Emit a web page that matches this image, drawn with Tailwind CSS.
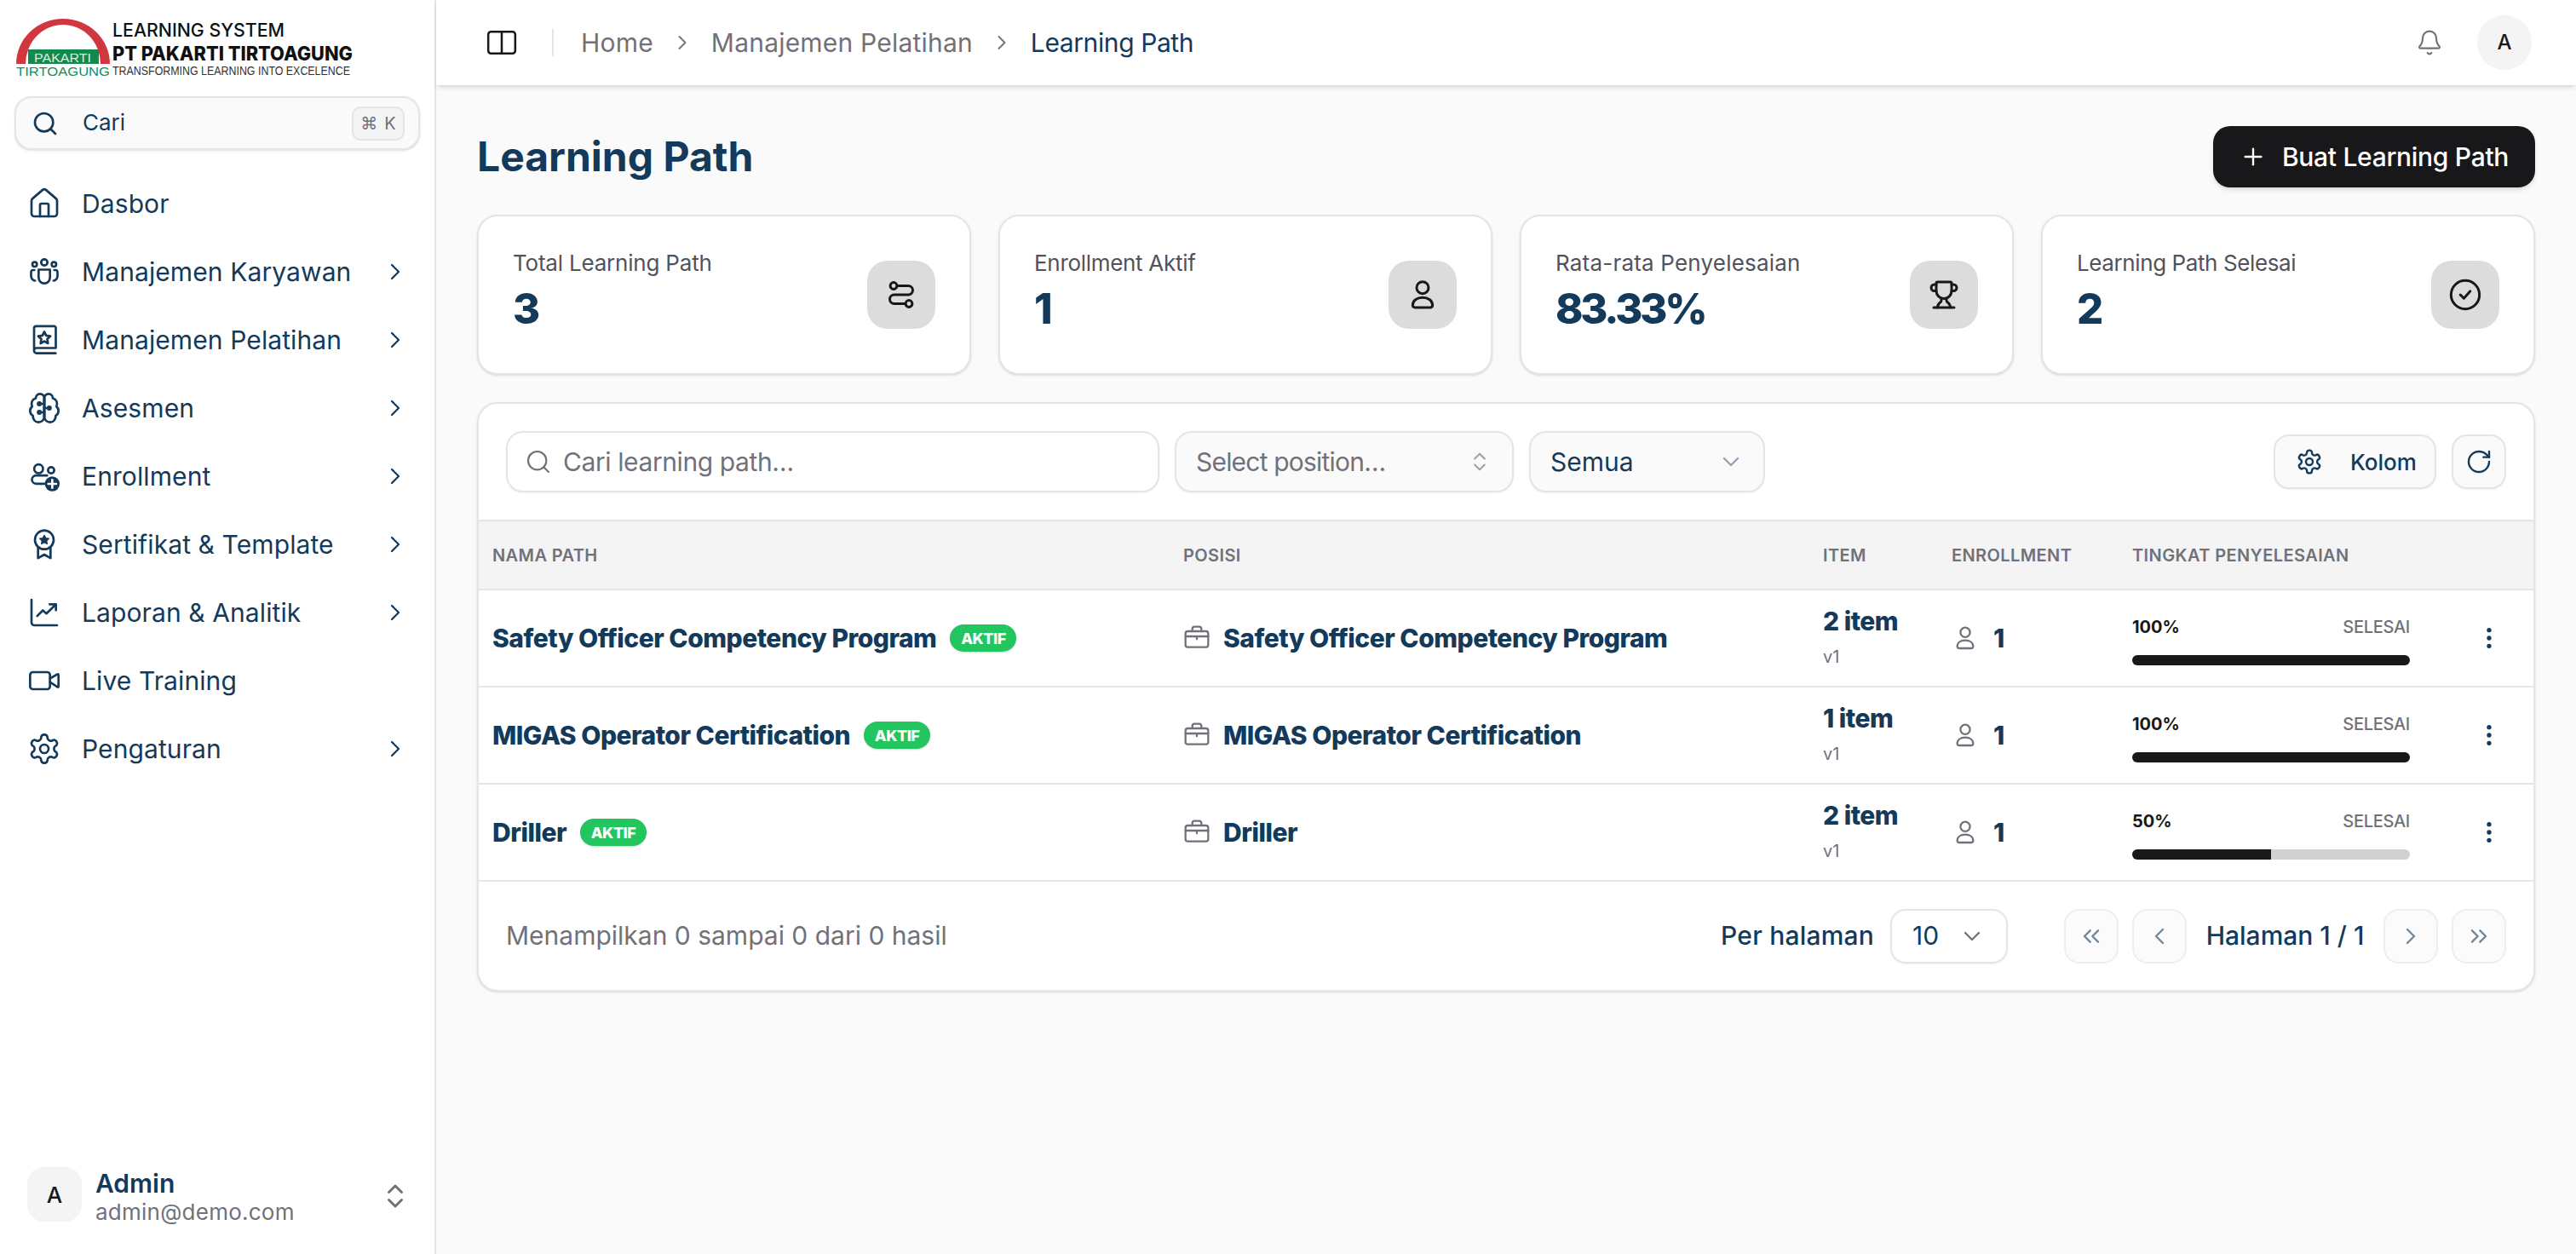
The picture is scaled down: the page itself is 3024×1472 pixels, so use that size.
<!DOCTYPE html>
<html lang="id">

<head>
  <meta charset="UTF-8" />
  <title>Learning Path</title>
  <script src="https://cdn.jsdelivr.net/npm/@tailwindcss/browser@4"></script>
</head>

<body class="h-screen overflow-hidden flex bg-[#fafafa] text-[#133a5b] font-[Inter,sans-serif]">

  <!-- Sidebar -->
  <aside class="w-[512px] shrink-0 h-full bg-white border-r-2 border-[#e4e4ea] flex flex-col">
    <svg class="block shrink-0" width="510" height="113" viewBox="0 0 510 113">
      <path d="M19 75a55 53 0 0 1 110 0h-11a44 46 0 0 0-88 0z" fill="#d1373f" />
      <rect x="33" y="58" width="83" height="17" fill="#14894e" />
      <text x="40" y="73" font-family="Liberation Sans" font-size="15" fill="#d9efe2" textLength="67" lengthAdjust="spacingAndGlyphs">PAKARTI</text>
      <text x="19" y="89" font-family="Liberation Sans" font-size="15.5" fill="#1d8a55" textLength="110" lengthAdjust="spacingAndGlyphs">TIRTOAGUNG</text>
      <text x="132" y="43" font-family="Inter" font-weight="500" font-size="22" fill="#111" textLength="202" lengthAdjust="spacingAndGlyphs">LEARNING SYSTEM</text>
      <text x="132" y="71" font-family="Inter" font-weight="800" font-size="23" fill="#111" textLength="282" lengthAdjust="spacingAndGlyphs">PT PAKARTI TIRTOAGUNG</text>
      <text x="132" y="88" font-family="Liberation Sans" font-size="14" fill="#333" textLength="279" lengthAdjust="spacingAndGlyphs">TRANSFORMING LEARNING INTO EXCELENCE</text>
    </svg>

    <div class="mx-[17px] w-[476px] h-[63px] shrink-0 rounded-[20px] border-2 border-[#e4e4ea] bg-[#fafafa] shadow-sm flex items-center pl-[18px] pr-[16px]">
      <svg class="w-8 h-8" viewBox="0 0 24 24" fill="none" stroke="currentColor" stroke-width="2" stroke-linecap="round" stroke-linejoin="round"><path d="m21 21-4.34-4.34" /><circle cx="11" cy="11" r="8" /></svg>
      <span class="ml-[28px] pb-[2px] text-[26px]">Cari</span>
      <span class="ml-auto w-[62px] h-[40px] rounded-[10px] border-2 border-[#e4e4ea] bg-[#f4f4f5] text-[#71717a] text-[20px] flex items-center justify-center gap-2 font-['DejaVu_Sans',sans-serif]">⌘<span class="font-[Inter,sans-serif]">K</span></span>
    </div>

    <nav class="mt-[23px] text-[30px] tracking-[0.1px]">
      <a class="h-[80px] flex items-center pl-8 pr-[30px] gap-[24px]">
        <svg class="w-10 h-10 shrink-0" viewBox="0 0 24 24" fill="none" stroke="currentColor" stroke-width="1.6" stroke-linecap="round" stroke-linejoin="round"><path d="M15 21v-8a1 1 0 0 0-1-1h-4a1 1 0 0 0-1 1v8" /><path d="M3 10a2 2 0 0 1 .709-1.528l7-5.999a2 2 0 0 1 2.582 0l7 5.999A2 2 0 0 1 21 10v9a2 2 0 0 1-2 2H5a2 2 0 0 1-2-2z" /></svg>
        <span>Dasbor</span>
      </a>
      <a class="h-[80px] flex items-center pl-8 pr-[30px] gap-[24px]">
        <svg class="w-10 h-10 shrink-0" viewBox="0 0 24 24" fill="none" stroke="currentColor" stroke-width="1.6" stroke-linecap="round" stroke-linejoin="round"><circle cx="12" cy="5.4" r="2.2" /><circle cx="5.2" cy="6.8" r="1.6" /><circle cx="18.8" cy="6.8" r="1.6" /><path d="M8 10.5h8v5.7a4 4 0 0 1-8 0z" /><path d="M5 10.8H4.2A1.5 1.5 0 0 0 2.7 12.3v2.5a3.6 3.6 0 0 0 2.8 3.5" /><path d="M19 10.8h.8a1.5 1.5 0 0 1 1.5 1.5v2.5a3.6 3.6 0 0 1-2.8 3.5" /></svg>
        <span>Manajemen Karyawan</span>
        <svg class="w-8 h-8 ml-auto" viewBox="0 0 24 24" fill="none" stroke="currentColor" stroke-width="1.7" stroke-linecap="round" stroke-linejoin="round"><path d="m9 18 6-6-6-6" /></svg>
      </a>
      <a class="h-[80px] flex items-center pl-8 pr-[30px] gap-[24px]">
        <svg class="w-10 h-10 shrink-0" viewBox="0 0 24 24" fill="none" stroke="currentColor" stroke-width="1.6" stroke-linecap="round" stroke-linejoin="round"><path d="M4.8 19.5V3.8a1.5 1.5 0 0 1 1.5-1.5h12.6a1.2 1.2 0 0 1 1.2 1.2v14.2H6.5a1.8 1.8 0 0 0-1.7 1.8 1.8 1.8 0 0 0 1.7 1.9H20" /><path d="M12 6.2l1.3 2.7 3 .4-2.2 2.1.5 3-2.6-1.4-2.6 1.4.5-3-2.2-2.1 3-.4z" /></svg>
        <span>Manajemen Pelatihan</span>
        <svg class="w-8 h-8 ml-auto" viewBox="0 0 24 24" fill="none" stroke="currentColor" stroke-width="1.7" stroke-linecap="round" stroke-linejoin="round"><path d="m9 18 6-6-6-6" /></svg>
      </a>
      <a class="h-[80px] flex items-center pl-8 pr-[30px] gap-[24px]">
        <svg class="w-10 h-10 shrink-0" viewBox="0 0 24 24" fill="none" stroke="currentColor" stroke-width="1.6" stroke-linecap="round" stroke-linejoin="round"><path d="M12 5a3 3 0 1 0-5.997.125 4 4 0 0 0-2.526 5.77 4 4 0 0 0 .556 6.588A4 4 0 1 0 12 18Z" /><path d="M12 5a3 3 0 1 1 5.997.125 4 4 0 0 1 2.526 5.77 4 4 0 0 1-.556 6.588A4 4 0 1 1 12 18Z" /><path d="M12 5v13M12 9H9.5M12 15H9.5M12 12h2.5" /><circle cx="8.5" cy="9" r="1" /><circle cx="8.5" cy="15" r="1" /><circle cx="15.5" cy="12" r="1" /></svg>
        <span>Asesmen</span>
        <svg class="w-8 h-8 ml-auto" viewBox="0 0 24 24" fill="none" stroke="currentColor" stroke-width="1.7" stroke-linecap="round" stroke-linejoin="round"><path d="m9 18 6-6-6-6" /></svg>
      </a>
      <a class="h-[80px] flex items-center pl-8 pr-[30px] gap-[24px]">
        <svg class="w-10 h-10 shrink-0" viewBox="0 0 24 24" fill="none" stroke="currentColor" stroke-width="1.6" stroke-linecap="round" stroke-linejoin="round"><circle cx="8" cy="6.8" r="3.1" /><circle cx="16.8" cy="7.8" r="2.2" /><path d="M14 11.5H6.2a2.9 2.9 0 0 0 0 5.8H12" /><circle cx="17.6" cy="17.4" r="5.2" fill="currentColor" stroke="none" /><path d="M17.6 14.6v5.6M14.8 17.4h5.6" stroke="#fff" /></svg>
        <span>Enrollment</span>
        <svg class="w-8 h-8 ml-auto" viewBox="0 0 24 24" fill="none" stroke="currentColor" stroke-width="1.7" stroke-linecap="round" stroke-linejoin="round"><path d="m9 18 6-6-6-6" /></svg>
      </a>
      <a class="h-[80px] flex items-center pl-8 pr-[30px] gap-[24px]">
        <svg class="w-10 h-10 shrink-0" viewBox="0 0 24 24" fill="none" stroke="currentColor" stroke-width="1.6" stroke-linecap="round" stroke-linejoin="round"><circle cx="12" cy="8.8" r="6.6" /><path d="M12 5.6l1 2 2.2.3-1.6 1.5.4 2.2-2-1-2 1 .4-2.2-1.6-1.5 2.2-.3z" fill="currentColor" stroke-width="0.8" /><path d="M7.6 14.5v7.2L12 19.2l4.4 2.5v-7.2" /></svg>
        <span>Sertifikat &amp; Template</span>
        <svg class="w-8 h-8 ml-auto" viewBox="0 0 24 24" fill="none" stroke="currentColor" stroke-width="1.7" stroke-linecap="round" stroke-linejoin="round"><path d="m9 18 6-6-6-6" /></svg>
      </a>
      <a class="h-[80px] flex items-center pl-8 pr-[30px] gap-[24px]">
        <svg class="w-10 h-10 shrink-0" viewBox="0 0 24 24" fill="none" stroke="currentColor" stroke-width="1.6" stroke-linecap="round" stroke-linejoin="round"><path d="M3 3v16a2 2 0 0 0 2 2h16" /><path d="m7 14.5 4-4 2.5 2.2 6.5-6.2" /><path d="M15.8 6.2h4.4v4.2" /></svg>
        <span>Laporan &amp; Analitik</span>
        <svg class="w-8 h-8 ml-auto" viewBox="0 0 24 24" fill="none" stroke="currentColor" stroke-width="1.7" stroke-linecap="round" stroke-linejoin="round"><path d="m9 18 6-6-6-6" /></svg>
      </a>
      <a class="h-[80px] flex items-center pl-8 pr-[30px] gap-[24px]">
        <svg class="w-10 h-10 shrink-0" viewBox="0 0 24 24" fill="none" stroke="currentColor" stroke-width="1.6" stroke-linecap="round" stroke-linejoin="round"><path d="m16 13 5.223 3.482a.5.5 0 0 0 .777-.416V7.87a.5.5 0 0 0-.752-.432L16 10.5" /><rect x="2" y="6" width="14" height="12" rx="2" /></svg>
        <span>Live Training</span>
      </a>
      <a class="h-[80px] flex items-center pl-8 pr-[30px] gap-[24px]">
        <svg class="w-10 h-10 shrink-0" viewBox="0 0 24 24" fill="none" stroke="currentColor" stroke-width="1.6" stroke-linecap="round" stroke-linejoin="round"><path d="M12.22 2h-.44a2 2 0 0 0-2 2v.18a2 2 0 0 1-1 1.73l-.43.25a2 2 0 0 1-2 0l-.15-.08a2 2 0 0 0-2.73.73l-.22.38a2 2 0 0 0 .73 2.73l.15.1a2 2 0 0 1 1 1.72v.51a2 2 0 0 1-1 1.74l-.15.09a2 2 0 0 0-.73 2.73l.22.38a2 2 0 0 0 2.73.73l.15-.08a2 2 0 0 1 2 0l.43.25a2 2 0 0 1 1 1.73V20a2 2 0 0 0 2 2h.44a2 2 0 0 0 2-2v-.18a2 2 0 0 1 1-1.73l.43-.25a2 2 0 0 1 2 0l.15.08a2 2 0 0 0 2.73-.73l.22-.39a2 2 0 0 0-.73-2.73l-.15-.08a2 2 0 0 1-1-1.74v-.5a2 2 0 0 1 1-1.74l.15-.09a2 2 0 0 0 .73-2.73l-.22-.38a2 2 0 0 0-2.73-.73l-.15.08a2 2 0 0 1-2 0l-.43-.25a2 2 0 0 1-1-1.73V4a2 2 0 0 0-2-2z" /><circle cx="12" cy="12" r="3" /></svg>
        <span>Pengaturan</span>
        <svg class="w-8 h-8 ml-auto" viewBox="0 0 24 24" fill="none" stroke="currentColor" stroke-width="1.7" stroke-linecap="round" stroke-linejoin="round"><path d="m9 18 6-6-6-6" /></svg>
      </a>
    </nav>

    <div class="mt-auto mb-8 pl-8 pr-[30px] flex items-center">
      <div class="w-16 h-16 rounded-[20px] bg-[#f4f4f5] text-[#18181b] text-[26px] font-medium flex items-center justify-center">A</div>
      <div class="ml-4 pt-[8px] flex flex-col">
        <span class="text-[30px] leading-[34px] font-semibold">Admin</span>
        <span class="text-[26px] leading-[34px] tracking-[0.25px] text-[#71717a]">admin@demo.com</span>
      </div>
      <svg class="w-9 h-9 ml-auto -mr-[2px] mt-[4px] text-[#71717a]" viewBox="0 0 24 24" fill="none" stroke="currentColor" stroke-width="2" stroke-linecap="round" stroke-linejoin="round"><path d="m7 15 5 5 5-5" /><path d="m7 9 5-5 5 5" /></svg>
    </div>
  </aside>

  <!-- Main -->
  <div class="flex-1 min-w-0 flex flex-col">
    <header class="relative h-[100px] shrink-0 bg-white shadow-md flex items-center pl-[58px] pr-[52px]">
      <svg class="w-[38px] h-[38px] text-[#18181b]" viewBox="0 0 24 24" fill="none" stroke="currentColor" stroke-width="1.6" stroke-linecap="round" stroke-linejoin="round"><rect x="2" y="4" width="20" height="16" rx="2" /><path d="M12 4v16" /></svg>
      <div class="ml-[40px] w-[2px] h-8 bg-[#e4e4ea]"></div>
      <nav class="ml-[32px] flex items-center text-[30px] tracking-[0.2px] text-[#71717a]">
        <span>Home</span>
        <svg class="w-7 h-7 mx-[20px]" viewBox="0 0 24 24" fill="none" stroke="currentColor" stroke-width="1.6" stroke-linecap="round" stroke-linejoin="round"><path d="m9 18 6-6-6-6" /></svg>
        <span>Manajemen Pelatihan</span>
        <svg class="w-7 h-7 mx-[20px]" viewBox="0 0 24 24" fill="none" stroke="currentColor" stroke-width="1.6" stroke-linecap="round" stroke-linejoin="round"><path d="m9 18 6-6-6-6" /></svg>
        <span class="text-[#133a5b] tracking-[-0.4px]">Learning Path</span>
      </nav>
      <svg class="ml-auto w-8 h-8 text-[#71717a]" viewBox="0 0 24 24" fill="none" stroke="currentColor" stroke-width="1.6" stroke-linecap="round" stroke-linejoin="round"><path d="M10.268 21a2 2 0 0 0 3.464 0" /><path d="M3.262 15.326A1 1 0 0 0 4 17h16a1 1 0 0 0 .74-1.673C19.41 13.956 18 12.499 18 8A6 6 0 0 0 6 8c0 4.499-1.411 5.956-2.738 7.326" /></svg>
      <div class="ml-[40px] w-16 h-16 rounded-full bg-[#f4f4f5] text-[#18181b] text-[24px] font-medium flex items-center justify-center">A</div>
    </header>

    <main class="flex-1 min-h-0 px-12 pt-12">
      <div class="flex items-center justify-between h-[72px]">
        <h1 class="text-[48px] font-bold">Learning Path</h1>
        <button class="h-[72px] w-[378px] rounded-[20px] bg-[#18181b] text-white text-[30px] font-medium tracking-[-0.3px] shadow-md flex items-center justify-center gap-[18px]">
          <svg class="w-8 h-8" viewBox="0 0 24 24" fill="none" stroke="currentColor" stroke-width="1.8" stroke-linecap="round" stroke-linejoin="round"><path d="M5 12h14" /><path d="M12 5v14" /></svg>
          Buat Learning Path
        </button>
      </div>

      <!-- Stat cards -->
      <div class="mt-8 grid grid-cols-4 gap-8">
        <div class="h-[188px] rounded-[24px] border-2 border-[#e4e4ea] bg-white shadow-sm flex items-center justify-between px-10">
          <div class="pb-[6px]">
            <div class="text-[26px] leading-[40px] tracking-[-0.2px] text-[#52525b]">Total Learning Path</div>
            <div class="text-[49px] leading-[68px] font-extrabold tracking-[-3.2px]">3</div>
          </div>
          <div class="w-20 h-20 rounded-[24px] bg-[#dcdcdc] text-[#18181b] flex items-center justify-center">
            <svg class="w-9 h-9" viewBox="0 0 24 24" fill="none" stroke="currentColor" stroke-width="2" stroke-linecap="round" stroke-linejoin="round"><circle cx="6" cy="5" r="2.6" /><path d="M9 5h8.5a3.5 3.5 0 0 1 0 7h-11a3.5 3.5 0 0 0 0 7H15" /><circle cx="18" cy="19" r="2.6" /></svg>
          </div>
        </div>
        <div class="h-[188px] rounded-[24px] border-2 border-[#e4e4ea] bg-white shadow-sm flex items-center justify-between px-10">
          <div class="pb-[6px]">
            <div class="text-[26px] leading-[40px] tracking-[-0.3px] text-[#52525b]">Enrollment Aktif</div>
            <div class="text-[49px] leading-[68px] font-extrabold tracking-[-3.2px]">1</div>
          </div>
          <div class="w-20 h-20 rounded-[24px] bg-[#dcdcdc] text-[#18181b] flex items-center justify-center">
            <svg class="w-10 h-10" viewBox="0 0 24 24" fill="none" stroke="currentColor" stroke-width="1.8" stroke-linecap="round" stroke-linejoin="round"><circle cx="12" cy="7" r="4.2" /><path d="M5 19.5c0-3.5 3-5.5 7-5.5s7 2 7 5.5c0 1-.8 1.5-2 1.5H7c-1.2 0-2-.5-2-1.5z" /></svg>
          </div>
        </div>
        <div class="h-[188px] rounded-[24px] border-2 border-[#e4e4ea] bg-white shadow-sm flex items-center justify-between px-10">
          <div class="pb-[6px]">
            <div class="text-[26px] leading-[40px] tracking-[0.2px] text-[#52525b]">Rata-rata Penyelesaian</div>
            <div class="text-[49px] leading-[68px] font-extrabold tracking-[-3.2px]">83.33%</div>
          </div>
          <div class="w-20 h-20 rounded-[24px] bg-[#dcdcdc] text-[#18181b] flex items-center justify-center">
            <svg class="w-9 h-9" viewBox="0 0 24 24" fill="none" stroke="currentColor" stroke-width="2" stroke-linecap="round" stroke-linejoin="round"><path d="M10 14.66v1.626a2 2 0 0 1-.976 1.696A5 5 0 0 0 7 21.978" /><path d="M14 14.66v1.626a2 2 0 0 0 .976 1.696A5 5 0 0 1 17 21.978" /><path d="M18 9h1.5a1 1 0 0 0 0-5H18" /><path d="M4 22h16" /><path d="M6 9a6 6 0 0 0 12 0V3a1 1 0 0 0-1-1H7a1 1 0 0 0-1 1z" /><path d="M6 9H4.5a1 1 0 0 1 0-5H6" /></svg>
          </div>
        </div>
        <div class="h-[188px] rounded-[24px] border-2 border-[#e4e4ea] bg-white shadow-sm flex items-center justify-between px-10">
          <div class="pb-[6px]">
            <div class="text-[26px] leading-[40px] tracking-[-0.4px] text-[#52525b]">Learning Path Selesai</div>
            <div class="text-[49px] leading-[68px] font-extrabold tracking-[-3.2px]">2</div>
          </div>
          <div class="w-20 h-20 rounded-[24px] bg-[#dcdcdc] text-[#18181b] flex items-center justify-center">
            <svg class="w-10 h-10" viewBox="0 0 24 24" fill="none" stroke="currentColor" stroke-width="1.8" stroke-linecap="round" stroke-linejoin="round"><circle cx="12" cy="12" r="10" /><path d="m8.5 12 2.5 2.5 4.5-5" /></svg>
          </div>
        </div>
      </div>

      <!-- Table card -->
      <div class="mt-8 rounded-[24px] border-2 border-[#e4e4ea] bg-white shadow-sm overflow-hidden">
        <div class="h-[138px] border-b-2 border-[#e4e4ea] px-8 flex items-center gap-[18px]">
          <div class="w-[767px] h-[72px] rounded-[20px] border-2 border-[#e4e4ea] bg-white shadow-xs flex items-center pl-[20px] text-[30px] text-[#71717a]">
            <svg class="w-8 h-8 shrink-0" viewBox="0 0 24 24" fill="none" stroke="currentColor" stroke-width="1.6" stroke-linecap="round" stroke-linejoin="round"><path d="m21 21-4.34-4.34" /><circle cx="11" cy="11" r="8" /></svg>
            <span class="ml-[13px] tracking-[-0.4px]">Cari learning path…</span>
          </div>
          <div class="w-[398px] h-[72px] rounded-[20px] border-2 border-[#e4e4ea] bg-[#fafafa] shadow-xs flex items-center justify-between pl-[23px] pr-[24px] text-[30px] text-[#71717a]">
            <span class="tracking-[-0.8px]">Select position…</span>
            <svg class="w-7 h-7 text-[#a1a1aa]" viewBox="0 0 24 24" fill="none" stroke="currentColor" stroke-width="1.8" stroke-linecap="round" stroke-linejoin="round"><path d="m7 15 5 5 5-5" /><path d="m7 9 5-5 5 5" /></svg>
          </div>
          <div class="w-[277px] h-[72px] rounded-[20px] border-2 border-[#e4e4ea] bg-[#fafafa] shadow-xs flex items-center justify-between pl-[23px] pr-[22px] text-[30px]">
            <span>Semua</span>
            <svg class="w-8 h-8 text-[#8fa0b2]" viewBox="0 0 24 24" fill="none" stroke="currentColor" stroke-width="1.7" stroke-linecap="round" stroke-linejoin="round"><path d="m6 9 6 6 6-6" /></svg>
          </div>
          <button class="ml-auto w-[191px] h-[64px] rounded-[18px] border-2 border-[#e4e4ea] bg-[#fafafa] shadow-xs flex items-center pl-[24px] text-[26px] font-medium">
            <svg class="w-8 h-8" viewBox="0 0 24 24" fill="none" stroke="currentColor" stroke-width="1.8" stroke-linecap="round" stroke-linejoin="round"><path d="M12.22 2h-.44a2 2 0 0 0-2 2v.18a2 2 0 0 1-1 1.73l-.43.25a2 2 0 0 1-2 0l-.15-.08a2 2 0 0 0-2.73.73l-.22.38a2 2 0 0 0 .73 2.73l.15.1a2 2 0 0 1 1 1.72v.51a2 2 0 0 1-1 1.74l-.15.09a2 2 0 0 0-.73 2.73l.22.38a2 2 0 0 0 2.73.73l.15-.08a2 2 0 0 1 2 0l.43.25a2 2 0 0 1 1 1.73V20a2 2 0 0 0 2 2h.44a2 2 0 0 0 2-2v-.18a2 2 0 0 1 1-1.73l.43-.25a2 2 0 0 1 2 0l.15.08a2 2 0 0 0 2.73-.73l.22-.39a2 2 0 0 0-.73-2.73l-.15-.08a2 2 0 0 1-1-1.74v-.5a2 2 0 0 1 1-1.74l.15-.09a2 2 0 0 0 .73-2.73l-.22-.38a2 2 0 0 0-2.73-.73l-.15.08a2 2 0 0 1-2 0l-.43-.25a2 2 0 0 1-1-1.73V4a2 2 0 0 0-2-2z" /><circle cx="12" cy="12" r="3" /></svg>
            <span class="ml-[32px]">Kolom</span>
          </button>
          <button class="w-16 h-16 rounded-[18px] border-2 border-[#e4e4ea] bg-[#fafafa] shadow-xs flex items-center justify-center">
            <svg class="w-8 h-8" viewBox="0 0 24 24" fill="none" stroke="currentColor" stroke-width="1.8" stroke-linecap="round" stroke-linejoin="round"><path d="M21 12a9 9 0 1 1-9-9c2.52 0 4.93 1 6.74 2.74L21 8" /><path d="M21 3v5h-5" /></svg>
          </button>
        </div>

        <table class="w-full table-fixed border-separate border-spacing-0 text-left">
          <colgroup>
            <col class="w-[811px]" /><col class="w-[751px]" /><col class="w-[151px]" /><col class="w-[212px]" /><col class="w-[358px]" /><col class="w-[129px]" />
          </colgroup>
          <thead class="bg-[#f4f4f5] text-[20px] font-semibold tracking-[0.4px] text-[#71717a] uppercase">
            <tr>
              <th class="h-[81px] px-4 font-semibold border-b-2 border-[#e4e4ea]">Nama Path</th>
              <th class="px-4 font-semibold border-b-2 border-[#e4e4ea]">Posisi</th>
              <th class="px-4 font-semibold border-b-2 border-[#e4e4ea]">Item</th>
              <th class="px-4 font-semibold border-b-2 border-[#e4e4ea]">Enrollment</th>
              <th class="px-4 font-semibold border-b-2 border-[#e4e4ea]">Tingkat Penyelesaian</th>
              <th class="border-b-2 border-[#e4e4ea]"></th>
            </tr>
          </thead>
          <tbody class="text-[30px] font-extrabold tracking-[-0.5px]">
            <tr>
              <td class="h-[114px] px-4 border-b-2 border-[#e4e4ea]">
                <div class="flex items-center gap-4">
                  <span>Safety Officer Competency Program</span>
                  <span class="h-8 w-[78px] rounded-full bg-[#22c55e] text-white text-[18px] font-extrabold shadow-sm flex items-center justify-center">AKTIF</span>
                </div>
              </td>
              <td class="px-4 border-b-2 border-[#e4e4ea]">
                <div class="flex items-center gap-[15px]">
                  <svg class="w-8 h-8 shrink-0 text-[#71717a]" viewBox="0 0 24 24" fill="none" stroke="currentColor" stroke-width="1.7" stroke-linecap="round" stroke-linejoin="round"><path d="M16 6V4a2 2 0 0 0-2-2h-4a2 2 0 0 0-2 2v2" /><rect x="2" y="6" width="20" height="14" rx="2" /><path d="M2 10.5h20M12 10.5v2.5" /></svg>
                  <span>Safety Officer Competency Program</span>
                </div>
              </td>
              <td class="px-4 border-b-2 border-[#e4e4ea]">
                <div class="pb-[2px] leading-[42px]">2 item</div>
                <div class="text-[20px] leading-[38px] tracking-normal font-normal text-[#71717a]">v1</div>
              </td>
              <td class="px-4 border-b-2 border-[#e4e4ea]">
                <div class="flex items-center gap-[17px]">
                  <svg class="w-8 h-8 text-[#71717a]" viewBox="0 0 24 24" fill="none" stroke="currentColor" stroke-width="1.7" stroke-linecap="round" stroke-linejoin="round"><circle cx="12" cy="7" r="4.2" /><path d="M5 19.5c0-3.5 3-5.5 7-5.5s7 2 7 5.5c0 1-.8 1.5-2 1.5H7c-1.2 0-2-.5-2-1.5z" /></svg>
                  <span>1</span>
                </div>
              </td>
              <td class="px-4 pt-[4px] border-b-2 border-[#e4e4ea]">
                <div class="flex items-center justify-between text-[20px] tracking-normal font-bold">
                  <span class="text-[#18181b]">100%</span>
                  <span class="font-medium tracking-[-0.3px] text-[#71717a]">SELESAI</span>
                </div>
                <div class="mt-[18px] h-3 rounded-full bg-[#d1d1d1] overflow-hidden">
                  <div class="h-full bg-[#18181b]" style="width: 100%"></div>
                </div>
              </td>
              <td class="border-b-2 border-[#e4e4ea]">
                <svg class="ml-[61px] w-8 h-8" viewBox="0 0 24 24" fill="none" stroke="currentColor" stroke-width="2" stroke-linecap="round" stroke-linejoin="round"><circle cx="12" cy="5" r="1" /><circle cx="12" cy="12" r="1" /><circle cx="12" cy="19" r="1" /></svg>
              </td>
            </tr>
            <tr>
              <td class="h-[114px] px-4 border-b-2 border-[#e4e4ea]">
                <div class="flex items-center gap-4">
                  <span>MIGAS Operator Certification</span>
                  <span class="h-8 w-[78px] rounded-full bg-[#22c55e] text-white text-[18px] font-extrabold shadow-sm flex items-center justify-center">AKTIF</span>
                </div>
              </td>
              <td class="px-4 border-b-2 border-[#e4e4ea]">
                <div class="flex items-center gap-[15px]">
                  <svg class="w-8 h-8 shrink-0 text-[#71717a]" viewBox="0 0 24 24" fill="none" stroke="currentColor" stroke-width="1.7" stroke-linecap="round" stroke-linejoin="round"><path d="M16 6V4a2 2 0 0 0-2-2h-4a2 2 0 0 0-2 2v2" /><rect x="2" y="6" width="20" height="14" rx="2" /><path d="M2 10.5h20M12 10.5v2.5" /></svg>
                  <span>MIGAS Operator Certification</span>
                </div>
              </td>
              <td class="px-4 border-b-2 border-[#e4e4ea]">
                <div class="pb-[2px] leading-[42px]">1 item</div>
                <div class="text-[20px] leading-[38px] tracking-normal font-normal text-[#71717a]">v1</div>
              </td>
              <td class="px-4 border-b-2 border-[#e4e4ea]">
                <div class="flex items-center gap-[17px]">
                  <svg class="w-8 h-8 text-[#71717a]" viewBox="0 0 24 24" fill="none" stroke="currentColor" stroke-width="1.7" stroke-linecap="round" stroke-linejoin="round"><circle cx="12" cy="7" r="4.2" /><path d="M5 19.5c0-3.5 3-5.5 7-5.5s7 2 7 5.5c0 1-.8 1.5-2 1.5H7c-1.2 0-2-.5-2-1.5z" /></svg>
                  <span>1</span>
                </div>
              </td>
              <td class="px-4 pt-[4px] border-b-2 border-[#e4e4ea]">
                <div class="flex items-center justify-between text-[20px] tracking-normal font-bold">
                  <span class="text-[#18181b]">100%</span>
                  <span class="font-medium tracking-[-0.3px] text-[#71717a]">SELESAI</span>
                </div>
                <div class="mt-[18px] h-3 rounded-full bg-[#d1d1d1] overflow-hidden">
                  <div class="h-full bg-[#18181b]" style="width: 100%"></div>
                </div>
              </td>
              <td class="border-b-2 border-[#e4e4ea]">
                <svg class="ml-[61px] w-8 h-8" viewBox="0 0 24 24" fill="none" stroke="currentColor" stroke-width="2" stroke-linecap="round" stroke-linejoin="round"><circle cx="12" cy="5" r="1" /><circle cx="12" cy="12" r="1" /><circle cx="12" cy="19" r="1" /></svg>
              </td>
            </tr>
            <tr>
              <td class="h-[114px] px-4 border-b-2 border-[#e4e4ea]">
                <div class="flex items-center gap-4">
                  <span>Driller</span>
                  <span class="h-8 w-[78px] rounded-full bg-[#22c55e] text-white text-[18px] font-extrabold shadow-sm flex items-center justify-center">AKTIF</span>
                </div>
              </td>
              <td class="px-4 border-b-2 border-[#e4e4ea]">
                <div class="flex items-center gap-[15px]">
                  <svg class="w-8 h-8 shrink-0 text-[#71717a]" viewBox="0 0 24 24" fill="none" stroke="currentColor" stroke-width="1.7" stroke-linecap="round" stroke-linejoin="round"><path d="M16 6V4a2 2 0 0 0-2-2h-4a2 2 0 0 0-2 2v2" /><rect x="2" y="6" width="20" height="14" rx="2" /><path d="M2 10.5h20M12 10.5v2.5" /></svg>
                  <span>Driller</span>
                </div>
              </td>
              <td class="px-4 border-b-2 border-[#e4e4ea]">
                <div class="pb-[2px] leading-[42px]">2 item</div>
                <div class="text-[20px] leading-[38px] tracking-normal font-normal text-[#71717a]">v1</div>
              </td>
              <td class="px-4 border-b-2 border-[#e4e4ea]">
                <div class="flex items-center gap-[17px]">
                  <svg class="w-8 h-8 text-[#71717a]" viewBox="0 0 24 24" fill="none" stroke="currentColor" stroke-width="1.7" stroke-linecap="round" stroke-linejoin="round"><circle cx="12" cy="7" r="4.2" /><path d="M5 19.5c0-3.5 3-5.5 7-5.5s7 2 7 5.5c0 1-.8 1.5-2 1.5H7c-1.2 0-2-.5-2-1.5z" /></svg>
                  <span>1</span>
                </div>
              </td>
              <td class="px-4 pt-[4px] border-b-2 border-[#e4e4ea]">
                <div class="flex items-center justify-between text-[20px] tracking-normal font-bold">
                  <span class="text-[#18181b]">50%</span>
                  <span class="font-medium tracking-[-0.3px] text-[#71717a]">SELESAI</span>
                </div>
                <div class="mt-[18px] h-3 rounded-full bg-[#d1d1d1] overflow-hidden">
                  <div class="h-full bg-[#18181b]" style="width: 50%"></div>
                </div>
              </td>
              <td class="border-b-2 border-[#e4e4ea]">
                <svg class="ml-[61px] w-8 h-8" viewBox="0 0 24 24" fill="none" stroke="currentColor" stroke-width="2" stroke-linecap="round" stroke-linejoin="round"><circle cx="12" cy="5" r="1" /><circle cx="12" cy="12" r="1" /><circle cx="12" cy="19" r="1" /></svg>
              </td>
            </tr>
          </tbody>
        </table>

        <!-- Pagination -->
        <div class="h-[127px] px-8 flex items-center text-[30px]">
          <span class="text-[#71717a]">Menampilkan 0 sampai 0 dari 0 hasil</span>
          <span class="ml-auto font-medium tracking-[0.2px]">Per halaman</span>
          <div class="ml-[19px] w-[138px] h-16 rounded-[18px] border-2 border-[#e4e4ea] bg-white shadow-xs flex items-center justify-between pl-[24px] pr-[24px]">
            <span>10</span>
            <svg class="w-8 h-8 text-[#71717a]" viewBox="0 0 24 24" fill="none" stroke="currentColor" stroke-width="1.7" stroke-linecap="round" stroke-linejoin="round"><path d="m6 9 6 6 6-6" /></svg>
          </div>
          <button class="ml-[66px] w-16 h-16 rounded-[18px] border-2 border-[#e4e4ea] bg-[#fafafa] opacity-60 flex items-center justify-center">
            <svg class="w-8 h-8" viewBox="0 0 24 24" fill="none" stroke="currentColor" stroke-width="1.8" stroke-linecap="round" stroke-linejoin="round"><path d="m11 17-5-5 5-5" /><path d="m18 17-5-5 5-5" /></svg>
          </button>
          <button class="ml-4 w-16 h-16 rounded-[18px] border-2 border-[#e4e4ea] bg-[#fafafa] opacity-60 flex items-center justify-center">
            <svg class="w-8 h-8" viewBox="0 0 24 24" fill="none" stroke="currentColor" stroke-width="1.8" stroke-linecap="round" stroke-linejoin="round"><path d="m15 18-6-6 6-6" /></svg>
          </button>
          <span class="w-[231px] text-center font-medium">Halaman 1 / 1</span>
          <button class="w-16 h-16 rounded-[18px] border-2 border-[#e4e4ea] bg-[#fafafa] opacity-60 flex items-center justify-center">
            <svg class="w-8 h-8" viewBox="0 0 24 24" fill="none" stroke="currentColor" stroke-width="1.8" stroke-linecap="round" stroke-linejoin="round"><path d="m9 18 6-6-6-6" /></svg>
          </button>
          <button class="ml-4 w-16 h-16 rounded-[18px] border-2 border-[#e4e4ea] bg-[#fafafa] opacity-60 flex items-center justify-center">
            <svg class="w-8 h-8" viewBox="0 0 24 24" fill="none" stroke="currentColor" stroke-width="1.8" stroke-linecap="round" stroke-linejoin="round"><path d="m6 17 5-5-5-5" /><path d="m13 17 5-5-5-5" /></svg>
          </button>
        </div>
      </div>
    </main>
  </div>

</body>

</html>
